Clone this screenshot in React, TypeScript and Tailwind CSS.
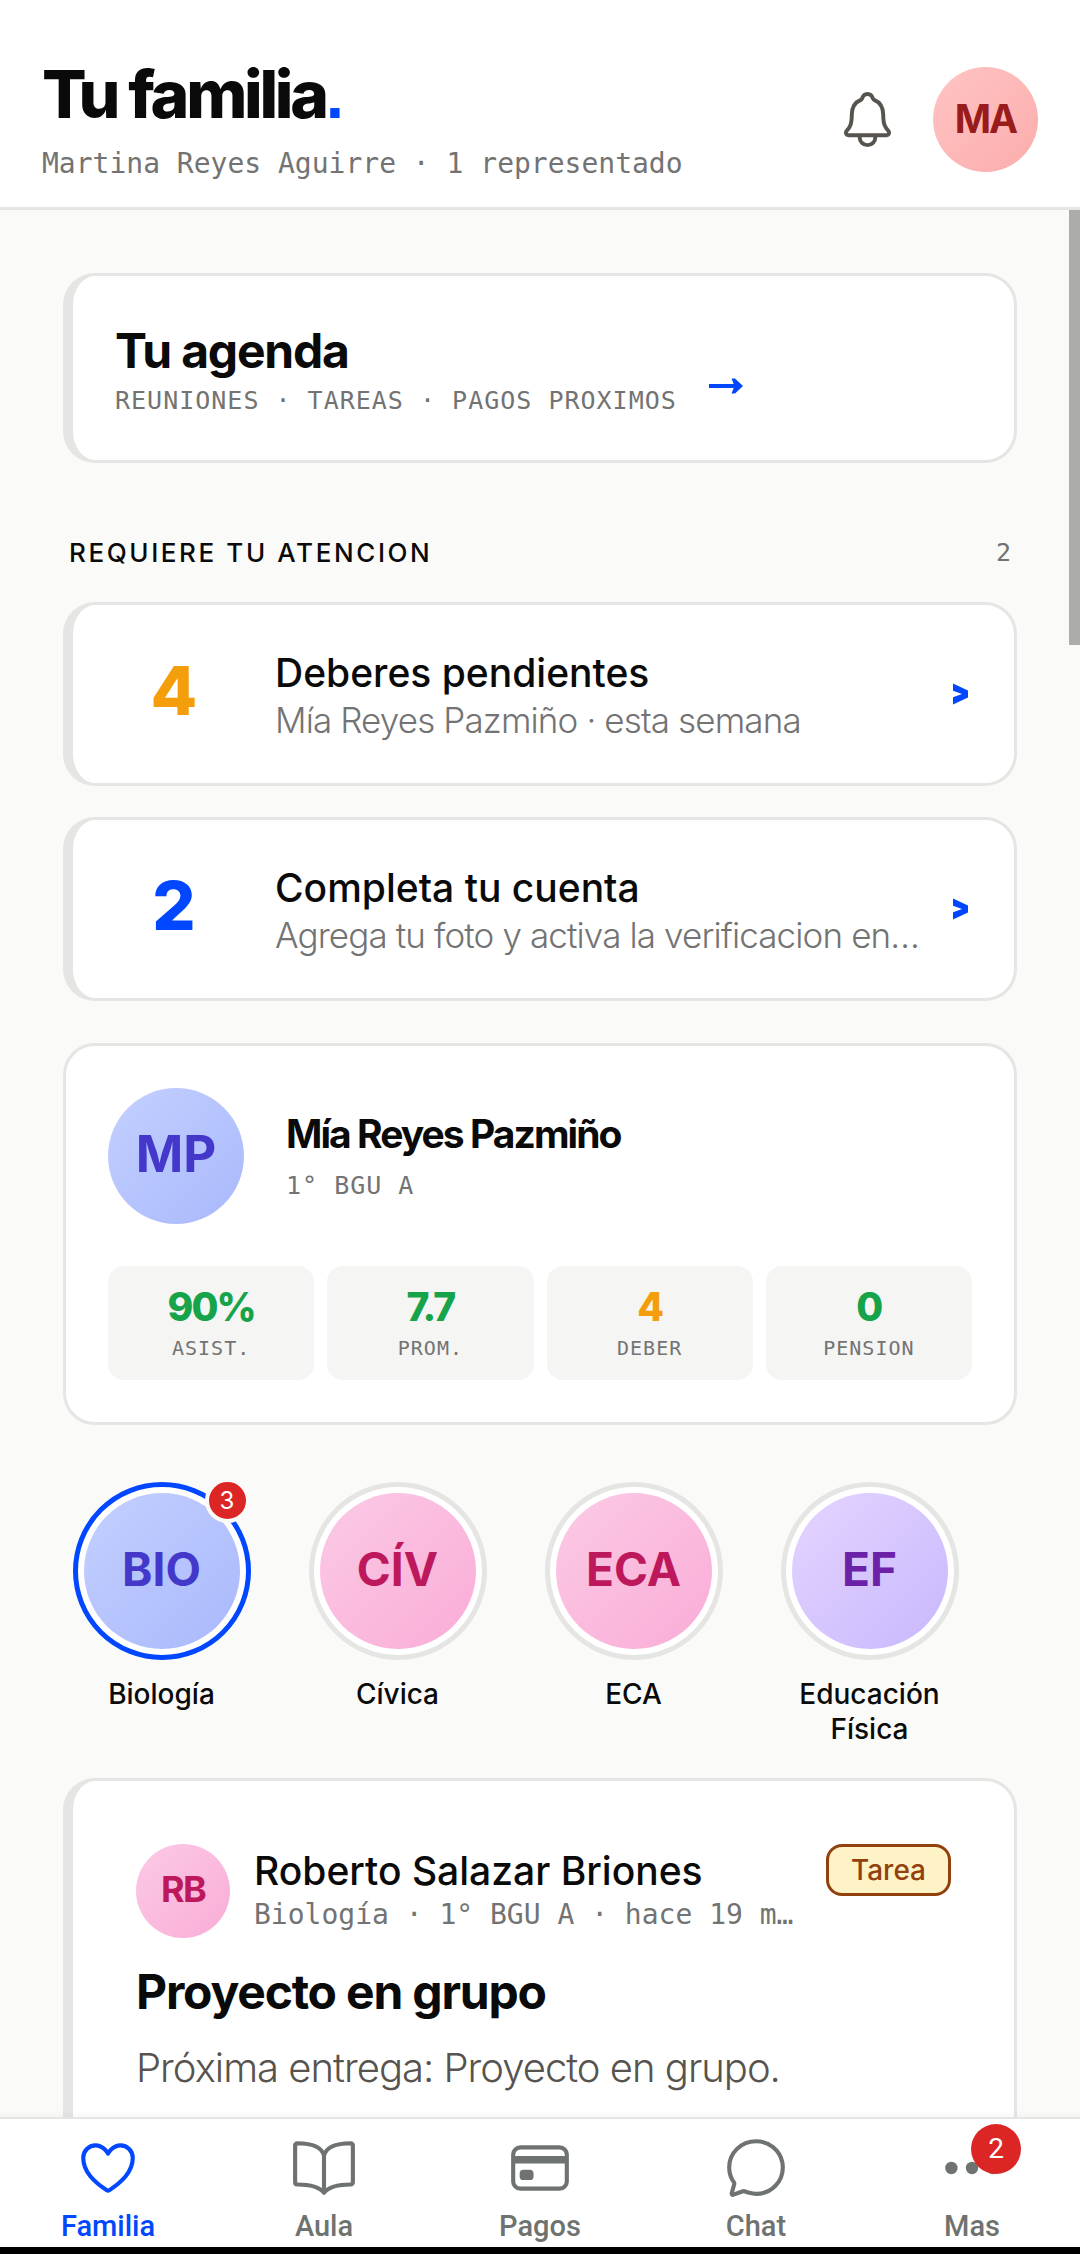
import type { ReactNode } from "react";
import {
  IoBookOutline,
  IoCardOutline,
  IoChatbubbleOutline,
  IoEllipsisHorizontal,
  IoHeartOutline,
  IoNotificationsOutline,
} from "react-icons/io5";

const alerts = [
  {
    count: 4,
    color: "text-[#f59e0b]",
    title: "Deberes pendientes",
    detail: "Mía Reyes Pazmiño · esta semana",
  },
  {
    count: 2,
    color: "text-[#0047ff]",
    title: "Completa tu cuenta",
    detail: "Agrega tu foto y activa la verificacion en…",
  },
];

const stats = [
  { value: "90%", label: "ASIST.", color: "text-[#16a34a]" },
  { value: "7.7", label: "PROM.", color: "text-[#16a34a]" },
  { value: "4", label: "DEBER", color: "text-[#f59e0b]" },
  { value: "0", label: "PENSION", color: "text-[#16a34a]" },
];

const INDIGO = "from-[#c4d0ff] to-[#a9b8fc] text-[#4338ca]";
const PINK = "from-[#fbcae5] to-[#faacd7] text-[#be185d]";
const PURPLE = "from-[#e5d4ff] to-[#c8b8fd] text-[#6b21a8]";
const RED = "from-[#ffc4c4] to-[#fcacac] text-[#991b1b]";

const subjects = [
  { code: "BIO", name: "Biología", tone: INDIGO, ring: "border-[#0047ff]", unread: 3 },
  { code: "CÍV", name: "Cívica", tone: PINK, ring: "border-[#e5e5e3]", unread: 0 },
  { code: "ECA", name: "ECA", tone: PINK, ring: "border-[#e5e5e3]", unread: 0 },
  { code: "EF", name: "Educación Física", tone: PURPLE, ring: "border-[#e5e5e3]", unread: 0 },
];

const tabs = [
  { label: "Familia", icon: IoHeartOutline, active: true, badge: 0 },
  { label: "Aula", icon: IoBookOutline, active: false, badge: 0 },
  { label: "Pagos", icon: IoCardOutline, active: false, badge: 0 },
  { label: "Chat", icon: IoChatbubbleOutline, active: false, badge: 0 },
  { label: "Mas", icon: IoEllipsisHorizontal, active: false, badge: 2 },
];

function Avatar({ size, tone, children }: { size: string; tone: string; children: ReactNode }) {
  return (
    <span
      className={`flex shrink-0 items-center justify-center rounded-full bg-linear-135 font-bold ${size} ${tone}`}
    >
      {children}
    </span>
  );
}

function Arrow() {
  return (
    <svg viewBox="0 0 34 16" className="mb-6 h-4 w-[34px] text-[#0047ff]" aria-hidden="true">
      <path d="M0 8H28" stroke="currentColor" strokeWidth="4" />
      <path d="M22.5 0.5h3.5L34 8L26 15.5h-3.5L25.5 8Z" fill="currentColor" />
    </svg>
  );
}

function Chevron() {
  return (
    <svg viewBox="0 0 15 22" className="mr-1 ml-8 h-[22px] w-[15px] text-[#0047ff]" aria-hidden="true">
      <path d="M0 0.5L15 7.5V14.5L0 21.5V14.2L9 11L0 7.8Z" fill="currentColor" />
    </svg>
  );
}

function Header() {
  return (
    <header className="flex shrink-0 items-center justify-between border-b-3 border-[#e5e5e3] bg-white px-[42px] pt-14 pb-6">
      <div>
        <h1 className="text-[66px] leading-[76px] font-extrabold tracking-tighter">
          Tu familia<span className="font-['Liberation_Sans',sans-serif] text-[#0047ff]">.</span>
        </h1>
        <p className="mt-3 font-['DejaVu_Sans_Mono',monospace] text-[28px] leading-[38px] text-[#737373]">
          Martina Reyes Aguirre · 1 representado
        </p>
      </div>
      <div className="flex items-center gap-[34px]">
        <button type="button" aria-label="Notificaciones" className="text-[#57534e]">
          <IoNotificationsOutline className="size-[63px]" />
        </button>
        <button type="button" aria-label="Perfil">
          <Avatar size="size-[105px] text-[39px] tracking-tighter" tone={RED}>MA</Avatar>
        </button>
      </div>
    </header>
  );
}

function AgendaCard() {
  return (
    <a
      href="#agenda"
      className="flex items-end gap-8 rounded-[32px] border-3 border-l-10 border-[#e5e5e3] bg-white p-[42px]"
    >
      <span>
        <span className="block text-[48px] leading-[66px] font-bold tracking-tight">Tu agenda</span>
        <span className="block font-['DejaVu_Sans_Mono',monospace] text-[25px] leading-[34px] tracking-[1px] text-[#737373]">
          REUNIONES · TAREAS · PAGOS PROXIMOS
        </span>
      </span>
      <Arrow />
    </a>
  );
}

function Alerts() {
  return (
    <section className="mt-[72px]">
      <div className="flex items-center justify-between px-[6px]">
        <h2 className="text-[26px] leading-[36px] font-medium tracking-widest">REQUIERE TU ATENCION</h2>
        <span className="font-['DejaVu_Sans_Mono',monospace] text-[25px] leading-[36px] text-[#737373]">2</span>
      </div>
      <div className="mt-[31px] flex flex-col gap-[31px]">
        {alerts.map((alert) => (
          <a
            key={alert.title}
            href="#alerta"
            className="flex items-center rounded-[32px] border-3 border-l-10 border-[#e5e5e3] bg-white px-[42px] py-10"
          >
            <span className={`w-[118px] shrink-0 pb-2 text-center text-[68px] leading-[90px] font-extrabold ${alert.color}`}>
              {alert.count}
            </span>
            <span className="ml-[42px] min-w-0 flex-1 pt-1 whitespace-nowrap">
              <span className="block text-[39px] leading-[48px] font-medium">{alert.title}</span>
              <span className="block text-[35px] leading-[46px] font-light tracking-tight text-[#737373]">
                {alert.detail}
              </span>
            </span>
            <Chevron />
          </a>
        ))}
      </div>
    </section>
  );
}

function StudentCard() {
  return (
    <section className="mt-[42px] rounded-[32px] border-3 border-[#e5e5e3] bg-white p-[42px]">
      <div className="flex items-center gap-[42px]">
        <Avatar size="size-[136px] pb-1 text-[51px]" tone={INDIGO}>MP</Avatar>
        <div className="pt-1">
          <h2 className="text-[39px] leading-[48px] font-bold tracking-tighter">Mía Reyes Pazmiño</h2>
          <p className="mt-2 font-['DejaVu_Sans_Mono',monospace] text-[25px] leading-[40px] tracking-[1px] text-[#737373]">
            1° BGU A
          </p>
        </div>
      </div>
      <dl className="mt-[42px] grid grid-cols-4 gap-[13px]">
        {stats.map((stat) => (
          <div key={stat.label} className="flex flex-col-reverse rounded-[16px] bg-[#f5f5f4] px-2 py-[16px] text-center">
            <dt className="font-['DejaVu_Sans_Mono',monospace] text-[20px] leading-[32px] tracking-[1px] text-[#737373]">
              {stat.label}
            </dt>
            <dd className={`text-[39px] leading-[50px] font-extrabold tracking-tighter ${stat.color}`}>{stat.value}</dd>
          </div>
        ))}
      </dl>
    </section>
  );
}

function Subjects() {
  return (
    <nav aria-label="Materias" className="mt-[57px] flex gap-[31px]">
      {subjects.map((subject) => (
        <button key={subject.code} type="button" className="flex w-[205px] shrink-0 flex-col items-center px-2 first:-ml-1">
          <span className={`relative rounded-full border-5 bg-white p-[6px] ${subject.ring}`}>
            <Avatar size="size-[156px] pb-1 text-[46px]" tone={subject.tone}>{subject.code}</Avatar>
            {subject.unread > 0 && (
              <span className="absolute -top-[9px] -right-1 flex size-[45px] items-center justify-center rounded-full border-4 border-[#fafaf8] bg-[#dc2626] text-[24px] leading-none text-white">
                {subject.unread}
              </span>
            )}
          </span>
          <span className="mt-[17px] text-[28px] leading-[35px] font-medium">{subject.name}</span>
        </button>
      ))}
    </nav>
  );
}

function Post() {
  return (
    <article className="mt-[31px] rounded-[32px] border-3 border-l-10 border-[#e5e5e3] bg-white p-[63px]">
      <div className="flex items-start">
        <Avatar size="size-[94px] pb-1 text-[36px] tracking-tighter" tone={PINK}>RB</Avatar>
        <div className="ml-6 min-w-0 flex-1 pt-1">
          <h3 className="text-[39px] leading-[46px] font-medium">Roberto Salazar Briones</h3>
          <p className="font-['DejaVu_Sans_Mono',monospace] text-[28px] leading-[42px] whitespace-nowrap text-[#737373]">
            Biología · 1° BGU A · hace 19 m…
          </p>
        </div>
        <span className="ml-6 rounded-[16px] border-3 border-[#92400e] bg-[#fef3c7] px-[22px] text-[28px] leading-[46px] font-medium text-[#92400e]">
          Tarea
        </span>
      </div>
      <h2 className="mt-6 text-[48px] leading-[60px] font-bold tracking-tight">Proyecto en grupo</h2>
      <p className="mt-[18px] text-[40px] leading-[56px] font-light tracking-tight text-[#57534e]">
        Próxima entrega: Proyecto en grupo.
      </p>
    </article>
  );
}

function TabBar() {
  return (
    <nav
      aria-label="Principal"
      className="relative grid shrink-0 grid-cols-5 border-t-2 border-b-7 border-t-[#e5e5e3] border-b-black bg-white pt-4 pb-[3px] font-['Roboto',sans-serif] shadow-[0_-2px_6px_rgba(0,0,0,0.04)]"
    >
      {tabs.map(({ label, icon: Icon, active, badge }) => (
        <a
          key={label}
          href={`#${label.toLowerCase()}`}
          className={`flex flex-col items-center ${active ? "text-[#0047ff]" : "text-[#6f7370]"}`}
        >
          <span className="relative">
            <Icon className="size-[66px]" />
            {badge > 0 && (
              <span className="absolute -top-[11px] -right-4 flex size-[50px] items-center justify-center rounded-full bg-[#dc2626] text-[28px] leading-none text-white">
                {badge}
              </span>
            )}
          </span>
          <span className="mt-[7px] text-[29px] leading-[36px] font-medium">{label}</span>
        </a>
      ))}
    </nav>
  );
}

export default function App() {
  return (
    <div className="flex h-screen flex-col bg-[#fafaf8] font-['Inter',sans-serif] text-[#0a0a0a]">
      <Header />
      <main className="relative min-h-0 flex-1 overflow-hidden px-[63px] pt-[63px]">
        <AgendaCard />
        <Alerts />
        <StudentCard />
        <Subjects />
        <Post />
        {/* scroll thumb */}
        <div className="absolute top-0 right-0 h-[435px] w-[11px] bg-[#acacaa]" />
      </main>
      <TabBar />
    </div>
  );
}
